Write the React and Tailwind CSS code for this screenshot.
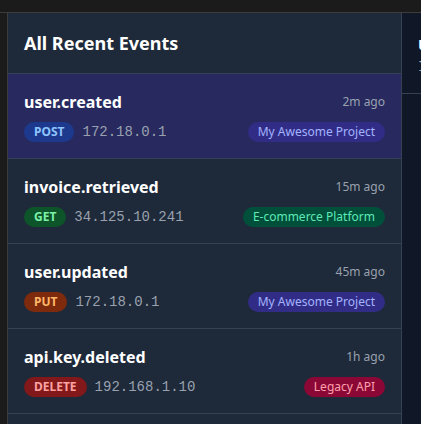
const events = [
  { name: 'user.created', method: 'POST', ip: '172.18.0.1', time: '2m ago', project: 'My Awesome Project', tone: 'indigo', selected: true },
  { name: 'invoice.retrieved', method: 'GET', ip: '34.125.10.241', time: '15m ago', project: 'E-commerce Platform', tone: 'emerald' },
  { name: 'user.updated', method: 'PUT', ip: '172.18.0.1', time: '45m ago', project: 'My Awesome Project', tone: 'indigo' },
  { name: 'api.key.deleted', method: 'DELETE', ip: '192.168.1.10', time: '1h ago', project: 'Legacy API', tone: 'rose' },
]

const methodStyles = {
  POST: 'bg-blue-900 text-blue-300',
  GET: 'bg-green-900 text-green-300',
  PUT: 'bg-orange-900 text-orange-300',
  DELETE: 'bg-red-900 text-red-300',
}

const projectStyles = {
  indigo: 'bg-indigo-900 text-indigo-300',
  emerald: 'bg-emerald-900 text-emerald-300',
  rose: 'bg-rose-900 text-rose-300',
}

function EventRow({ ev }) {
  return (
    <div className={`px-4 py-4 border-b border-gray-700 ${ev.selected ? 'bg-indigo-900/50' : ''}`}>
      <div className="flex items-center justify-between">
        <span className="text-base leading-6 font-bold text-white">{ev.name}</span>
        <span className="text-xs text-gray-400">{ev.time}</span>
      </div>
      <div className="mt-2 flex items-center justify-between">
        <div className="flex items-center gap-2">
          <span className={`rounded-full px-2.5 py-0.5 text-xs font-bold ${methodStyles[ev.method]}`}>
            {ev.method}
          </span>
          <span className="text-sm text-gray-400" style={{ fontFamily: '"Liberation Mono", monospace' }}>
            {ev.ip}
          </span>
        </div>
        <span className={`rounded-full px-2.5 py-0.5 text-xs ${projectStyles[ev.tone]}`}>{ev.project}</span>
      </div>
    </div>
  )
}

export default function App() {
  return (
    <div
      className="w-[421px] h-[424px] overflow-hidden bg-[#1b1b1b] flex flex-col"
      style={{ fontFamily: '"Noto Sans", sans-serif' }}
    >
      <div className="h-[13px] shrink-0 border-b border-[#3c3c3c]" />
      <div className="flex flex-1 min-h-0">
        <div className="w-[8px] shrink-0 border-r border-[#3c3c3c]" />
        <div className="w-[394px] shrink-0 bg-gray-800 border-r border-gray-700 flex flex-col">
          <div className="px-4 py-4 border-b border-gray-700">
            <h2 className="text-lg leading-7 font-bold text-white">All Recent Events</h2>
          </div>
          {events.map((ev) => (
            <EventRow key={ev.name} ev={ev} />
          ))}
        </div>
        <div className="flex-1 min-w-0 bg-gray-900">
          <div className="h-[81px] px-4 py-4 border-b border-gray-700 whitespace-nowrap">
            <h3 className="text-lg leading-7 font-bold text-white">user.created</h3>
            <p className="text-sm leading-5 text-gray-400" style={{ fontFamily: '"Liberation Mono", monospace' }}>
              ID: evt_01
            </p>
          </div>
        </div>
      </div>
    </div>
  )
}
